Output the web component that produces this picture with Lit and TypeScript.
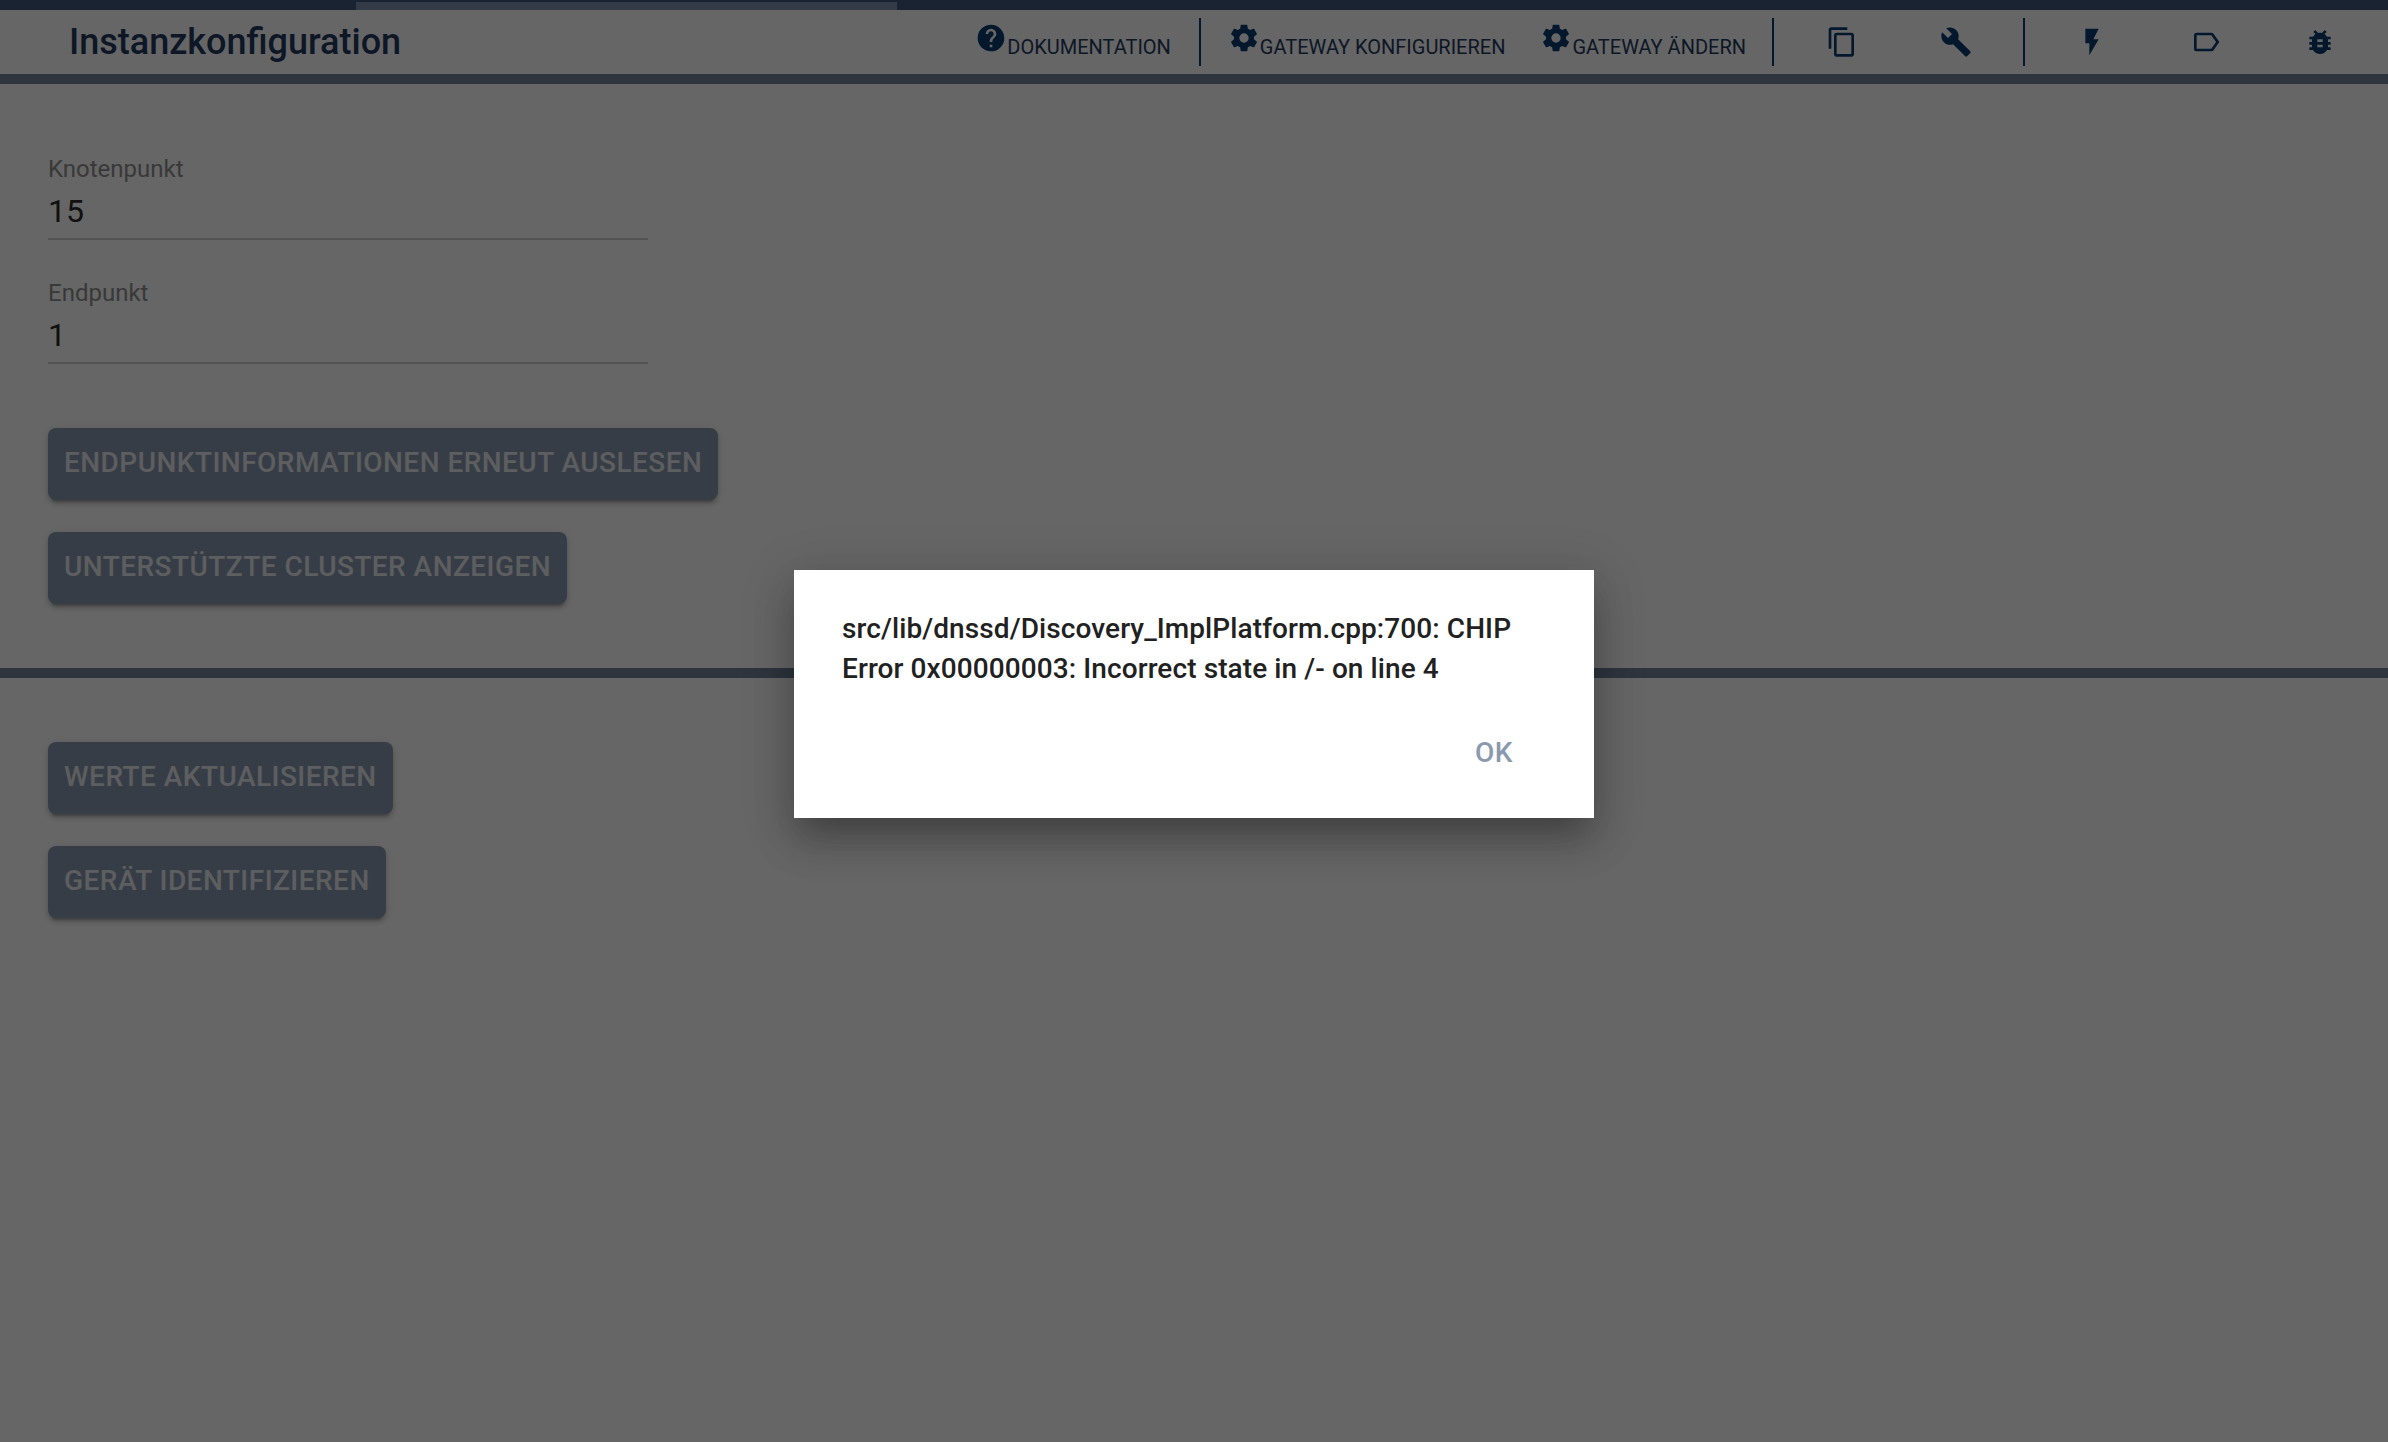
import { LitElement, html, css, svg } from "lit";
import { customElement } from "lit/decorators.js";

const ICONS = {
  help: "M15.07,11.25L14.17,12.17C13.45,12.89 13,13.5 13,15H11V14.5C11,13.39 11.45,12.39 12.17,11.67L13.41,10.41C13.78,10.05 14,9.55 14,9C14,7.89 13.1,7 12,7A2,2 0 0,0 10,9H8A4,4 0 0,1 12,5A4,4 0 0,1 16,9C16,9.88 15.64,10.67 15.07,11.25M13,19H11V17H13M12,2A10,10 0 0,0 2,12C2,17.53 6.47,22 12,22A10,10 0 0,0 22,12C22,6.47 17.5,2 12,2Z",
  cog: "M12,15.5A3.5,3.5 0 0,1 8.5,12A3.5,3.5 0 0,1 12,8.5A3.5,3.5 0 0,1 15.5,12A3.5,3.5 0 0,1 12,15.5M19.43,12.97C19.47,12.65 19.5,12.33 19.5,12C19.5,11.67 19.47,11.34 19.43,11L21.54,9.37C21.73,9.22 21.78,8.95 21.66,8.73L19.66,5.27C19.54,5.05 19.27,4.96 19.05,5.05L16.56,6.05C16.04,5.66 15.5,5.32 14.87,5.07L14.5,2.42C14.46,2.18 14.25,2 14,2H10C9.75,2 9.54,2.18 9.5,2.42L9.13,5.07C8.5,5.32 7.96,5.66 7.44,6.05L4.95,5.05C4.73,4.96 4.46,5.05 4.34,5.27L2.34,8.73C2.21,8.95 2.27,9.22 2.46,9.37L4.57,11C4.53,11.34 4.5,11.67 4.5,12C4.5,12.33 4.53,12.65 4.57,12.97L2.46,14.63C2.27,14.78 2.21,15.05 2.34,15.27L4.34,18.73C4.46,18.95 4.73,19.03 4.95,18.95L7.44,17.94C7.96,18.34 8.5,18.68 9.13,18.93L9.5,21.58C9.54,21.82 9.75,22 10,22H14C14.25,22 14.46,21.82 14.5,21.58L14.87,18.93C15.5,18.67 16.04,18.34 16.56,17.94L19.05,18.95C19.27,19.03 19.54,18.95 19.66,18.73L21.66,15.27C21.78,15.05 21.73,14.78 21.54,14.63L19.43,12.97Z",
  copy: "M19,21H8V7H19M19,5H8A2,2 0 0,0 6,7V21A2,2 0 0,0 8,23H19A2,2 0 0,0 21,21V7A2,2 0 0,0 19,5M16,1H4A2,2 0 0,0 2,3V17H4V3H16V1Z",
  wrench: "M22.7,19L13.6,9.9C14.5,7.6 14,4.9 12.1,3C10.1,1 7.1,0.6 4.7,1.7L9,6L6,9L1.6,4.7C0.4,7.1 0.9,10.1 2.9,12.1C4.8,14 7.5,14.5 9.8,13.6L18.9,22.7C19.3,23.1 19.9,23.1 20.3,22.7L22.6,20.4C23.1,20 23.1,19.3 22.7,19Z",
  flash: "M7,2V13H10V22L17,10H13L17,2H7Z",
  label: "M16,17H5V7H16L19.55,12M17.63,5.84C17.27,5.33 16.67,5 16,5H5A2,2 0 0,0 3,7V17A2,2 0 0,0 5,19H16C16.67,19 17.27,18.66 17.63,18.15L22,12L17.63,5.84Z",
  bug: "M14,12H10V10H14M14,16H10V14H14M20,8H17.19C16.74,7.22 16.12,6.55 15.37,6.04L17,4.41L15.59,3L13.42,5.17C12.96,5.06 12.5,5 12,5C11.5,5 11.04,5.06 10.59,5.17L8.41,3L7,4.41L8.62,6.04C7.88,6.55 7.26,7.22 6.81,8H4V10H6.09C6.04,10.33 6,10.66 6,11V12H4V14H6V15C6,15.34 6.04,15.67 6.09,16H4V18H6.81C7.85,19.79 9.78,21 12,21C14.22,21 16.15,19.79 17.19,18H20V16H17.91C17.96,15.67 18,15.34 18,15V14H20V12H18V11C18,10.66 17.96,10.33 17.91,10H20V8Z",
};

const icon = (d: string) =>
  html`<svg class="icon" viewBox="0 0 24 24" aria-hidden="true">${svg`<path d=${d}></path>`}</svg>`;

@customElement("app-root")
export class AppRoot extends LitElement {
  static styles = css`
    :host {
      display: block;
      position: relative;
      min-height: 1442px;
      background: #fff;
      font-family: Roboto, "Liberation Sans", sans-serif;
      overflow: hidden;
    }
    .progress {
      height: 10px;
      background: #41597c;
      padding: 2px 0 0 356px;
      box-sizing: border-box;
    }
    .progress div {
      width: 541px;
      height: 8px;
      background: #7f95b3;
    }
    .header {
      height: 64px;
      display: flex;
      align-items: center;
      background: #fff;
    }
    .title {
      flex: 1;
      padding-left: 69px;
      font-size: 36px;
      font-weight: 500;
      color: #243b5e;
      line-height: 64px;
    }
    .icon {
      width: 32px;
      height: 32px;
      fill: #0b3c70;
      display: block;
      flex: none;
    }
    .nav {
      display: flex;
      align-items: flex-start;
      font-size: 20px;
      color: #243b5e;
      line-height: 32px;
    }
    .nav span {
      padding-top: 9px;
    }
    .nav-doc {
      margin-right: 28px;
    }
    .nav-cfg {
      margin: 0 35px 0 27px;
    }
    .nav-chg {
      margin-right: 26px;
    }
    .sep {
      width: 2px;
      height: 48px;
      background: #0b3c70;
      flex: none;
    }
    .tool {
      width: 114px;
      display: flex;
      justify-content: center;
    }
    .tool-start {
      margin-left: 11px;
    }
    .tool-mid {
      margin-left: 10px;
    }
    .tool-end {
      margin-right: 11px;
    }
    .tool-tight {
      margin-right: 10px;
    }
    .bar {
      height: 10px;
      background: #73859b;
    }
    .section {
      padding: 64px 48px;
      display: flex;
      flex-direction: column;
      align-items: flex-start;
      gap: 32px;
    }
    .fields {
      padding: 71px 48px 0;
      display: flex;
      flex-direction: column;
      gap: 39px;
    }
    .field {
      width: 600px;
      padding-bottom: 7px;
      border-bottom: 2px solid #d0d0d0;
      display: flex;
      flex-direction: column;
      gap: 8px;
    }
    .field label {
      font-size: 24px;
      line-height: 28px;
      color: #8f8f8f;
    }
    .field output {
      font-size: 32px;
      line-height: 40px;
      color: #2b2b2b;
    }
    .btn {
      height: 72px;
      padding: 0 16px 4px;
      box-sizing: border-box;
      display: flex;
      align-items: center;
      background: #8a99ae;
      color: #e8eaee;
      border-radius: 8px;
      font-size: 28px;
      font-weight: 500;
      letter-spacing: 0.46px;
      text-transform: uppercase;
      box-shadow: 0 6px 2px -4px rgba(0, 0, 0, 0.2), 0 4px 4px 0 rgba(0, 0, 0, 0.14), 0 2px 10px 0 rgba(0, 0, 0, 0.12);
    }
    .scrim {
      position: absolute;
      inset: 0;
      background: rgba(0, 0, 0, 0.6);
      display: flex;
      justify-content: center;
      align-items: flex-start;
      padding-top: 570px;
      box-sizing: border-box;
    }
    .dialog {
      width: 800px;
      height: 248px;
      box-sizing: border-box;
      background: #fff;
      padding: 39px 48px 0;
      box-shadow: 0 22px 30px -14px rgba(0, 0, 0, 0.2), 0 24px 38px 3px rgba(0, 0, 0, 0.14), 0 9px 46px 8px rgba(0, 0, 0, 0.12);
      display: flex;
      flex-direction: column;
    }
    .msg {
      font-size: 28px;
      font-weight: 500;
      line-height: 40px;
      letter-spacing: 0.09px;
      color: #212121;
    }
    .actions {
      display: flex;
      justify-content: flex-end;
      margin-top: 44px;
    }
    .ok {
      font-size: 28px;
      font-weight: 500;
      line-height: 40px;
      letter-spacing: 0.46px;
      color: #8a99ae;
      margin-right: 33px;
    }
  `;

  render() {
    return html`
      <div class="progress"><div></div></div>
      <header class="header">
        <div class="title">Instanzkonfiguration</div>
        <div class="nav nav-doc">${icon(ICONS.help)}<span>DOKUMENTATION</span></div>
        <div class="sep"></div>
        <div class="nav nav-cfg">${icon(ICONS.cog)}<span>GATEWAY KONFIGURIEREN</span></div>
        <div class="nav nav-chg">${icon(ICONS.cog)}<span>GATEWAY ÄNDERN</span></div>
        <div class="sep"></div>
        <div class="tool tool-start">${icon(ICONS.copy)}</div>
        <div class="tool tool-tight">${icon(ICONS.wrench)}</div>
        <div class="sep"></div>
        <div class="tool tool-mid">${icon(ICONS.flash)}</div>
        <div class="tool">${icon(ICONS.label)}</div>
        <div class="tool tool-end">${icon(ICONS.bug)}</div>
      </header>
      <div class="bar"></div>
      <div class="fields">
        <div class="field"><label>Knotenpunkt</label><output>15</output></div>
        <div class="field"><label>Endpunkt</label><output>1</output></div>
      </div>
      <div class="section">
        <div class="btn">Endpunktinformationen erneut auslesen</div>
        <div class="btn">Unterstützte Cluster anzeigen</div>
      </div>
      <div class="bar"></div>
      <div class="section">
        <div class="btn">Werte aktualisieren</div>
        <div class="btn">Gerät identifizieren</div>
      </div>
      <div class="scrim">
        <div class="dialog" role="dialog">
          <div class="msg">src/lib/dnssd/Discovery_ImplPlatform.cpp:700: CHIP Error 0x00000003: Incorrect state in /- on line 4</div>
          <div class="actions"><div class="ok">OK</div></div>
        </div>
      </div>
    `;
  }
}
